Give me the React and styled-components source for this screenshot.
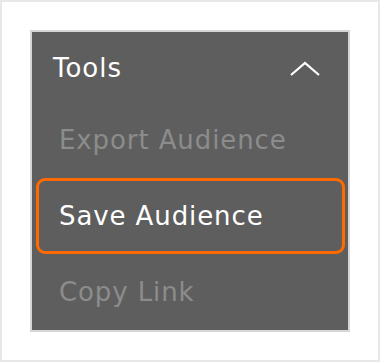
import React from 'react';
import styled, {createGlobalStyle} from 'styled-components';

const items = [
  {label: 'Export Audience', active: false},
  {label: 'Save Audience', active: true},
  {label: 'Copy Link', active: false},
];

const App = () => {
  return (
    <Frame>
      <GlobalStyle />
      <Panel>
        <Header>
          <Title>Tools</Title>
          <Chevron width="32" height="16" viewBox="0 0 32 16">
            <polyline points="2,14 16,2 30,14" fill="none" stroke="#fff" strokeWidth="2.3" />
          </Chevron>
        </Header>
        <Menu>
          {items.map(item => (
            <Item key={item.label} active={item.active}>{item.label}</Item>
          ))}
        </Menu>
      </Panel>
    </Frame>
  )
}

const GlobalStyle = createGlobalStyle`
  body {
    margin: 0;
    background: #fff;
  }
`

const Frame = styled.div`
  box-sizing: border-box;
  width: 380px;
  height: 362px;
  border: 2px solid #e8e8e8;
  background: #fff;
  padding: 28px;
  font-family: "DejaVu Sans", "Liberation Sans", sans-serif;
`

const Panel = styled.div`
  box-sizing: border-box;
  width: 320px;
  height: 302px;
  border: 2px solid #d6d6d6;
  background: #5e5e5e;
  display: flex;
  flex-direction: column;
`

const Header = styled.div`
  height: 70px;
  display: flex;
  align-items: center;
  justify-content: space-between;
  padding: 0 27px 0 21px;
`

const Title = styled.div`
  color: #fff;
  font-size: 26px;
  letter-spacing: 1px;
  margin-top: 2px;
`

const Chevron = styled.svg`
  margin-top: 3px;
`

const Menu = styled.div`
  display: flex;
  flex-direction: column;
  padding: 0 3px 0 4px;
`

const Item = styled.div`
  box-sizing: border-box;
  height: 76px;
  display: flex;
  align-items: center;
  padding-left: 20px;
  border: 3px solid ${p => p.active ? '#ff6a00' : 'transparent'};
  border-radius: 9px;
  color: ${p => p.active ? '#fff' : '#8c8c8c'};
  font-size: 26px;
  letter-spacing: 0.9px;
`

export default App
